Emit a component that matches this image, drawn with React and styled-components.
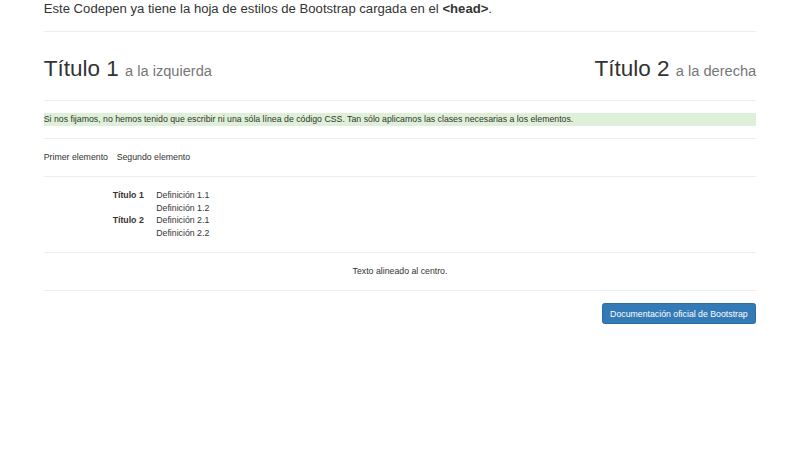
import React from "react";
import styled, { createGlobalStyle } from "styled-components";

const Global = createGlobalStyle`
  html, body { margin: 0; padding: 0; background: #fff; }
  body {
    font-family: "Liberation Sans", Arial, Helvetica, sans-serif;
    font-size: 8.75px;
    line-height: 12.5px;
    color: #333;
  }
  * { box-sizing: border-box; }
`;

const Container = styled.div`
  width: 731.25px;
  margin: 0 auto;
  padding: 0 9.375px;
`;

const Lead = styled.p`
  margin: 0 0 12.5px;
  font-size: 13.125px;
  line-height: 18.375px;
  font-weight: 300;
`;

const Strong = styled.strong`
  font-weight: 700;
`;

const Rule = styled.hr`
  margin: 12.5px 0 12.125px;
  border: 0;
  border-top: 1px solid #eee;
  height: 0;
`;

const TitleRow = styled.div`
  display: flex;
  justify-content: space-between;
  align-items: baseline;
  padding: 12.5px 0 6.25px;
`;

const Heading = styled.h1`
  margin: 0;
  font-size: 22.5px;
  line-height: 24.75px;
  font-weight: 500;
  color: #333;
`;

const Sub = styled.small`
  font-size: 65%;
  font-weight: 400;
  line-height: 1;
  color: #777;
`;

const Success = styled.p`
  margin: 0 0 6.25px;
  background: #dff0d8;
`;

const InlineList = styled.ul`
  list-style: none;
  padding: 0;
  margin: 0 0 6.25px -3.125px;
`;

const InlineItem = styled.li`
  display: inline-block;
  padding: 0 3.125px;
`;

const DefList = styled.dl`
  display: grid;
  grid-template-columns: 100px 1fr;
  column-gap: 12.5px;
  margin: 0 0 12.5px;
`;

const Term = styled.dt`
  grid-column: 1;
  text-align: right;
  font-weight: 700;
`;

const Desc = styled.dd`
  grid-column: 2;
  margin: 0;
`;

const Centered = styled.p`
  margin: 0 0 6.25px;
  text-align: center;
`;

const ButtonRow = styled.div`
  display: flex;
  justify-content: flex-end;
`;

const PrimaryButton = styled.a`
  display: inline-block;
  padding: 3.375px 7.5px;
  font-size: 8.75px;
  line-height: 12.5px;
  color: #fff;
  background: #337ab7;
  border: 1px solid #2e6da4;
  border-radius: 2.5px;
  text-decoration: none;
  white-space: nowrap;
`;

export default function App() {
  return (
    <>
      <Global />
      <Container>
        <Lead>
          Este Codepen ya tiene la hoja de estilos de Bootstrap cargada en el{" "}
          <Strong>&lt;head&gt;</Strong>.
        </Lead>
        <Rule />
        <TitleRow>
          <Heading>
            Título 1 <Sub>a la izquierda</Sub>
          </Heading>
          <Heading>
            Título 2 <Sub>a la derecha</Sub>
          </Heading>
        </TitleRow>
        <Rule />
        <Success>
          Si nos fijamos, no hemos tenido que escribir ni una sóla línea de código CSS. Tan sólo aplicamos las clases necesarias a los elementos.
        </Success>
        <Rule />
        <InlineList>
          <InlineItem>Primer elemento</InlineItem> <InlineItem>Segundo elemento</InlineItem>
        </InlineList>
        <Rule />
        <DefList>
          <Term>Título 1</Term>
          <Desc>Definición 1.1</Desc>
          <Desc>Definición 1.2</Desc>
          <Term>Título 2</Term>
          <Desc>Definición 2.1</Desc>
          <Desc>Definición 2.2</Desc>
        </DefList>
        <Rule />
        <Centered>Texto alineado al centro.</Centered>
        <Rule />
        <ButtonRow>
          <PrimaryButton href="#">Documentación oficial de Bootstrap</PrimaryButton>
        </ButtonRow>
      </Container>
    </>
  );
}
